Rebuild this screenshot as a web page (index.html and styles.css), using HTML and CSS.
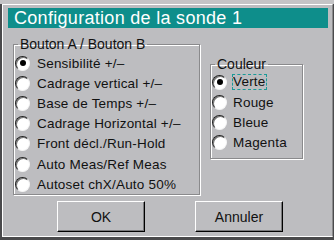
FILE: index.html
```html
<!DOCTYPE html>
<html lang="fr">
<head>
    <meta charset="UTF-8">
    <title>Configuration de la sonde 1</title>
    <link rel="stylesheet" href="styles.css">
</head>
<body>
<div class="menubar">
    <span class="menu-text">Voie &nbsp; Affi &nbsp; Base &nbsp; Déclen &nbsp; Mesur &nbsp;&nbsp; Utilitaires</span>
</div>
<div class="dialog">
    <div class="title">Configuration de la sonde 1</div>

    <div class="content">
        <fieldset class="group group-buttons">
            <legend>Bouton A / Bouton B</legend>
            <div class="option"><span class="radio checked"></span>Sensibilité +/–</div>
            <div class="option"><span class="radio"></span>Cadrage vertical +/–</div>
            <div class="option"><span class="radio"></span>Base de Temps +/–</div>
            <div class="option"><span class="radio"></span>Cadrage Horizontal +/–</div>
            <div class="option"><span class="radio"></span>Front décl./Run-Hold</div>
            <div class="option"><span class="radio"></span>Auto Meas/Ref Meas</div>
            <div class="option"><span class="radio"></span>Autoset chX/Auto 50%</div>
        </fieldset>

        <fieldset class="group group-color">
            <legend>Couleur</legend>
            <div class="option"><span class="radio checked"></span><span class="focus">Verte</span></div>
            <div class="option"><span class="radio"></span>Rouge</div>
            <div class="option"><span class="radio"></span>Bleue</div>
            <div class="option"><span class="radio"></span>Magenta</div>
        </fieldset>
    </div>

    <div class="actions">
        <button class="btn">OK</button>
        <button class="btn">Annuler</button>
    </div>
</div>
</body>
</html>
```

FILE: styles.css
```css
* {
    margin: 0;
    padding: 0;
    box-sizing: border-box;
}

body {
    width: 334px;
    height: 240px;
    overflow: hidden;
    background-color: #4a4a4c;
    font-family: "Liberation Sans", Arial, sans-serif;
    font-size: 13px;
    color: #111;
}

/* bout de la barre de menu, coupee en haut de l'ecran */
.menubar {
    height: 4px;
    overflow: hidden;
    background-color: #c4c4c6;
    padding-left: 8px;
}

.menu-text {
    display: block;
    margin-top: -12px;
    font-size: 13px;
    line-height: 15px;
    font-weight: bold;
    letter-spacing: 2px;
    white-space: nowrap;
}

.dialog {
    margin-left: 2px;
    width: 331px;
    height: 233px;
    background-color: #bdbdc0;
    border-top: 1px solid #fff;
    border-left: 1px solid #fff;
    border-bottom: 1px solid #fff;
    border-right: 1px solid #8a8a8c;
    display: flex;
    flex-direction: column;
}

.title {
    margin: 3px 4px 0 5px;
    height: 20px;
    background-color: #0e8e8b;
    color: #fff;
    font-size: 18px;
    line-height: 20px;
    padding-left: 6px;
    letter-spacing: 0.3px;
}

.content {
    display: flex;
    align-items: flex-start;
    margin-top: 9px;
    padding-left: 10px;
}

.group {
    border: 1px solid #8a8a8c;
    box-shadow: inset 1px 1px 0 #fff, 1px 1px 0 #fff;
    min-width: 0;
    padding: 0 0 0 1px;
}

.group legend {
    padding: 0 2px;
    margin-left: 3px;
    line-height: 15px;
    font-size: 14px;
}

.group-buttons {
    width: 187px;
    height: 158px;
    padding-top: 1px;
}

.group-color {
    width: 93px;
    height: 102px;
    margin-left: 10px;
    margin-top: 20px;
    padding-top: 0;
}

.option {
    display: flex;
    align-items: center;
    height: 20px;
    font-size: 13.5px;
    letter-spacing: 0.2px;
    white-space: nowrap;
}

.group-buttons .option:nth-child(7) {
    margin-top: 1px;
}

.radio {
    width: 15px;
    height: 15px;
    border-radius: 50%;
    background-color: #fff;
    border: 1px solid;
    border-color: #222 #f4f4f4 #f4f4f4 #222;
    box-shadow: inset 1px 1px 0 #777;
    margin-right: 7px;
    flex-shrink: 0;
    display: flex;
    align-items: center;
    justify-content: center;
}

.radio.checked::after {
    content: "";
    width: 6px;
    height: 6px;
    border-radius: 50%;
    background-color: #000;
}

.group-color .radio {
    margin-right: 6px;
}

.focus {
    outline: 1px dashed #1a9a98;
    outline-offset: 0;
    line-height: 14px;
}

.actions {
    display: flex;
    gap: 50px;
    margin-top: 6px;
    padding-left: 54px;
}

.btn {
    width: 88px;
    height: 31px;
    background-color: #bdbdc0;
    border: 1px solid;
    border-color: #fff #000 #000 #fff;
    box-shadow: inset -1px -1px 0 #7a7a7c;
    font-family: "Liberation Sans", Arial, sans-serif;
    font-size: 14px;
    color: #111;
}
```
